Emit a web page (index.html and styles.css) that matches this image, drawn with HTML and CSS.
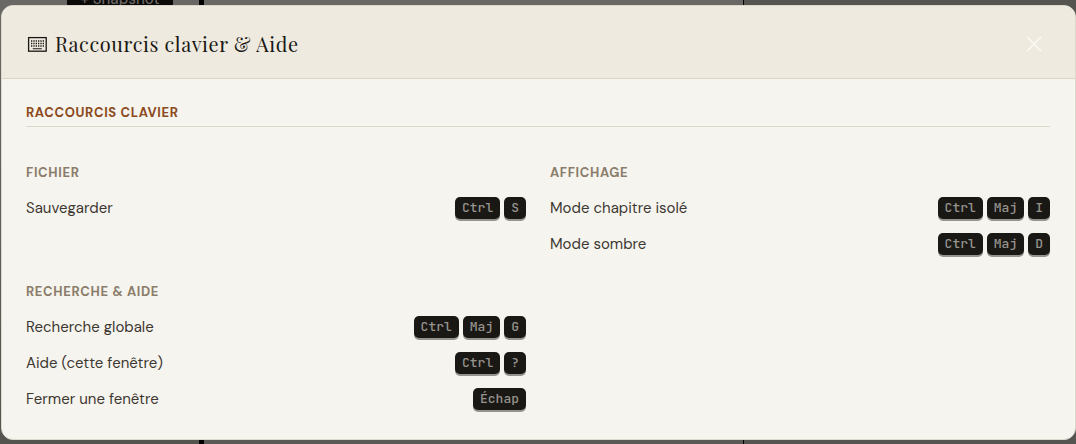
FILE: index.html
```
<!DOCTYPE html>
<html lang="fr">
<head>
    <meta charset="UTF-8">
    <meta name="viewport" content="width=device-width, initial-scale=1.0">
    <title>Raccourcis clavier &amp; Aide</title>
    <link rel="stylesheet" href="styles.css">
</head>
<body>

    <div class="app" aria-hidden="true">
        <div class="sidebar">
            <button class="snapshot" tabindex="-1">+ Snapshot</button>
        </div>
        <div class="editor"></div>
        <div class="panel"></div>
    </div>

    <div class="overlay">
        <div class="modal" role="dialog" aria-labelledby="help-title">
            <div class="modal-header">
                <h2 class="modal-title" id="help-title">
                    <svg class="keyboard" viewBox="0 0 21 17" aria-hidden="true">
                        <rect x="2.6" y="1.6" width="17.6" height="13.6" fill="none" stroke="currentColor" stroke-width="1.3"/>
                        <path d="M5 5h13M5 7.5h13M5 10h13" stroke="currentColor" stroke-width="1.4" stroke-dasharray="1.3 1.04"/>
                        <path d="M6.8 12.7h9" stroke="currentColor" stroke-width="1.1"/>
                    </svg>
                    Raccourcis clavier &amp; Aide
                </h2>
                <button class="close" aria-label="Fermer">
                    <svg viewBox="0 0 18 18" aria-hidden="true">
                        <path d="M1 1l16 16M17 1L1 17" stroke="currentColor" stroke-width="1.8"/>
                    </svg>
                </button>
            </div>

            <div class="modal-body">
                <h3 class="section-title">Raccourcis clavier</h3>

                <div class="shortcuts">
                    <div class="group">
                        <h4>Fichier</h4>
                        <div class="row">
                            <span>Sauvegarder</span>
                            <span class="keys"><kbd>Ctrl</kbd><kbd>S</kbd></span>
                        </div>
                    </div>

                    <div class="group">
                        <h4>Affichage</h4>
                        <div class="row">
                            <span>Mode chapitre isolé</span>
                            <span class="keys"><kbd>Ctrl</kbd><kbd>Maj</kbd><kbd>I</kbd></span>
                        </div>
                        <div class="row">
                            <span>Mode sombre</span>
                            <span class="keys"><kbd>Ctrl</kbd><kbd>Maj</kbd><kbd>D</kbd></span>
                        </div>
                    </div>

                    <div class="group">
                        <h4>Recherche &amp; Aide</h4>
                        <div class="row">
                            <span>Recherche globale</span>
                            <span class="keys"><kbd>Ctrl</kbd><kbd>Maj</kbd><kbd>G</kbd></span>
                        </div>
                        <div class="row">
                            <span>Aide (cette fenêtre)</span>
                            <span class="keys"><kbd>Ctrl</kbd><kbd>?</kbd></span>
                        </div>
                        <div class="row">
                            <span>Fermer une fenêtre</span>
                            <span class="keys"><kbd>Échap</kbd></span>
                        </div>
                    </div>
                </div>
            </div>
        </div>
    </div>

</body>
</html>
```
FILE: styles.css
```
*{
    box-sizing: border-box;
    margin: 0;
}

body{
    font-family: "DM Sans", Inter, "Liberation Sans", sans-serif;
    color: #3d3832;
    background: #5a5855;
}

/* page behind the dialog */
.app{
    position: absolute;
    inset: 0;
    display: flex;
    overflow: hidden;
}

.sidebar{
    width: 204px;
    background: linear-gradient(#6a6865, #555550);
    border-right: 5px solid #000;
}

.snapshot{
    display: block;
    width: 106px;
    height: 24px;
    margin: -13px 0 0 67px;
    padding: 0;
    border: 0;
    background: #0b0a09;
    color: #6a6865;
    font: 500 15px/24px "DM Sans", Inter, "Liberation Sans", sans-serif;
}

.editor{
    flex: 1;
    background: linear-gradient(#6a6865, #5a5955);
    border-right: 1px solid #000;
}

.panel{
    width: 332px;
    background: #555451;
}

.overlay{
    position: relative;
    padding: 5px 0 4px 1px;
}

.modal{
    background: #f6f4ee;
    border: 1px solid #dcd8cc;
    border-radius: 12px;
    overflow: hidden;
}

.modal-header{
    display: flex;
    align-items: center;
    justify-content: space-between;
    padding: 22px 25px 18px 24px;
    background: #eeeadf;
    border-bottom: 1px solid #d9d5c7;
}

.modal-title{
    display: flex;
    align-items: center;
    gap: 8px;
    font: 400 20px/32px "Playfair Display", "Liberation Serif", serif;
    letter-spacing: 0.03em;
    color: #1a1814;
}

.keyboard{
    width: 21px;
    height: 17px;
}

.close{
    width: 32px;
    height: 32px;
    padding: 8px;
    border: 0;
    background: none;
    color: #faf8f2;
    cursor: pointer;
}

.close svg{
    display: block;
    width: 16px;
    height: 16px;
}

.modal-body{
    padding: 25px 25px 22px 24px;
}

.section-title{
    padding-bottom: 4px;
    margin-bottom: 37px;
    border-bottom: 1px solid #dcd8cc;
    font-size: 13px;
    line-height: 18px;
    letter-spacing: 0.05em;
    text-transform: uppercase;
    color: #8b4a20;
}

.shortcuts{
    display: grid;
    grid-template-columns: 1fr 1fr;
    gap: 21px 24px;
}

h4{
    margin-bottom: 8px;
    font-size: 13px;
    font-weight: 700;
    line-height: 18px;
    letter-spacing: 0.05em;
    text-transform: uppercase;
    color: #8b7d6b;
}

.row{
    display: flex;
    align-items: center;
    justify-content: space-between;
    height: 36px;
    font-size: 15px;
}

.keys{
    display: flex;
    gap: 4px;
}

kbd{
    padding: 0 7px;
    border-radius: 5px;
    background: #1a1814;
    box-shadow: 0 2px 0 #96938e;
    color: #96938e;
    font: 500 13px/22px "JetBrains Mono", "DejaVu Sans Mono", monospace;
}
```
